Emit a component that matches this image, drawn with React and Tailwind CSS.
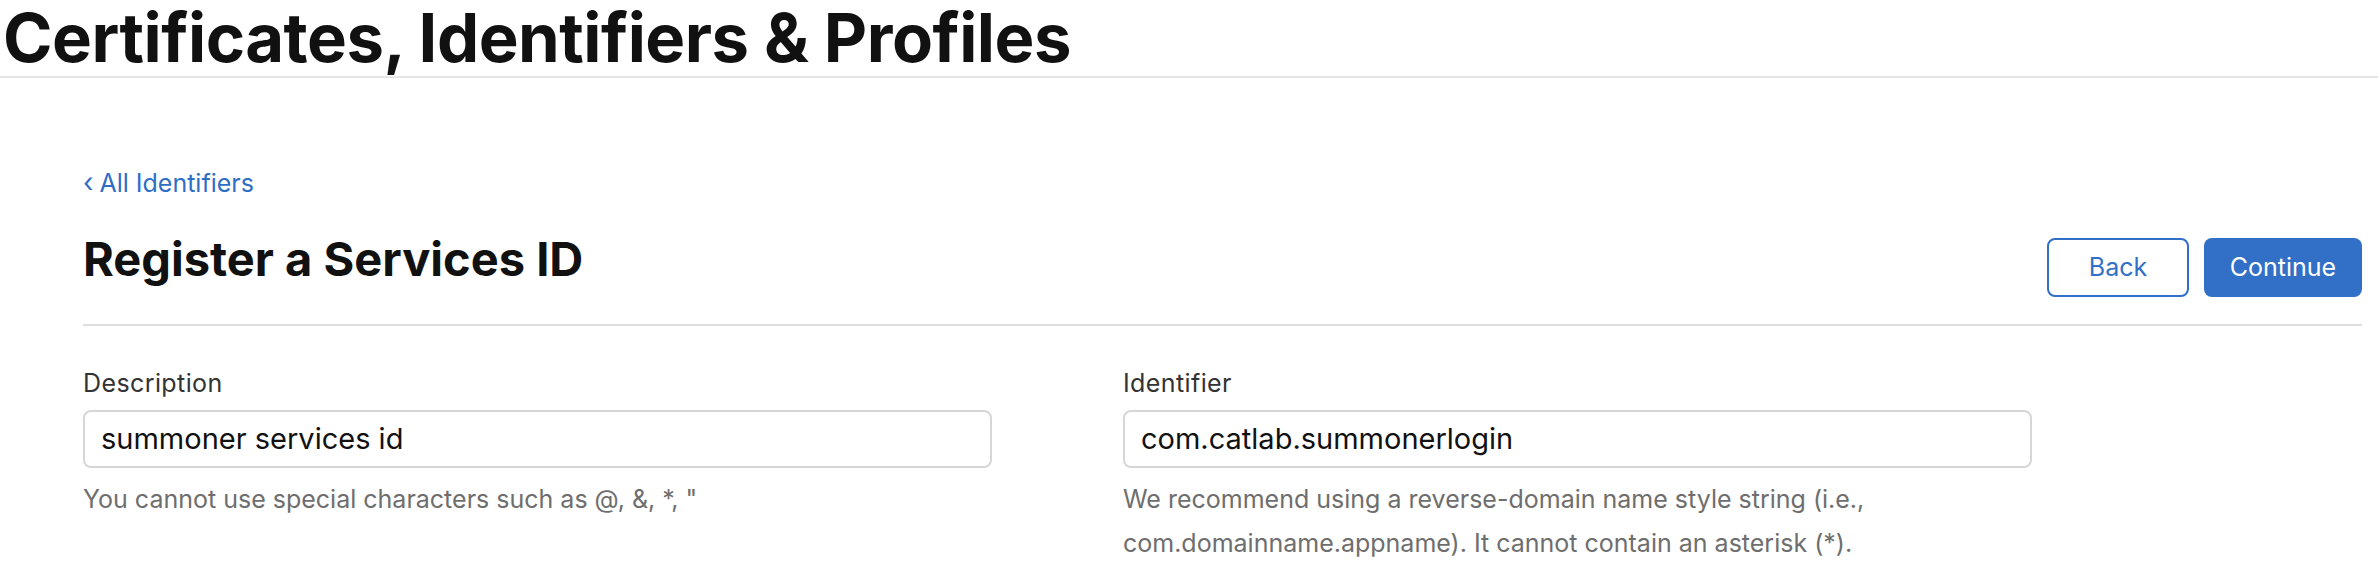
import React from "react";

const font = { fontFamily: "Inter, 'Noto Sans', Arial, sans-serif" };

function Field({ label, value, help }) {
  return (
    <div>
      <label className="block text-[25px] leading-[32px] tracking-[0.4px] text-[#333333]">{label}</label>
      <div className="mt-[11px] flex h-[58px] w-[909px] items-center rounded-[8px] border-2 border-[#d6d6d6] bg-white px-[16px]">
        <input
          defaultValue={value}
          className="w-full bg-transparent text-[29px] leading-[40px] text-[#111111] outline-none"
        />
      </div>
      <p className="mt-[9px] text-[25px] leading-[44px] text-[#6e6e6e]">{help}</p>
    </div>
  );
}

export default function App() {
  return (
    <div className="min-h-screen bg-white text-[#111111]" style={font}>
      <div className="border-b-2 border-[#e5e5e5] pl-[3px]">
        <h1 className="text-[67px] font-bold leading-[76px] tracking-[-0.5px]">
          Certificates, Identifiers &amp; Profiles
        </h1>
      </div>

      <div className="pl-[83px] pr-[16px] pt-[89px]">
        <a href="#" className="flex items-center gap-[6px] text-[25px] leading-[32px] text-[#2f6ec5]">
          <span className="text-[27px]">‹</span>
          <span>All Identifiers</span>
        </a>

        <div className="flex items-start justify-between border-b-2 border-[#dedede] pb-[27px]">
          <h2 className="mt-[32px] text-[47px] font-bold leading-[56px]">Register a Services ID</h2>
          <div className="mt-[39px] flex gap-[15px]">
            <button className="h-[59px] w-[142px] rounded-[8px] border-2 border-[#3170c6] bg-white text-[25px] text-[#3170c6]">
              Back
            </button>
            <button className="h-[59px] w-[158px] rounded-[8px] bg-[#3170c6] text-[25px] text-white">
              Continue
            </button>
          </div>
        </div>

        <div className="mt-[41px] grid grid-cols-[1040px_1040px]">
          <Field
            label="Description"
            value="summoner services id"
            help={'You cannot use special characters such as @, &, *, "'}
          />
          <Field
            label="Identifier"
            value="com.catlab.summonerlogin"
            help="We recommend using a reverse-domain name style string (i.e., com.domainname.appname). It cannot contain an asterisk (*)."
          />
        </div>
      </div>
    </div>
  );
}
